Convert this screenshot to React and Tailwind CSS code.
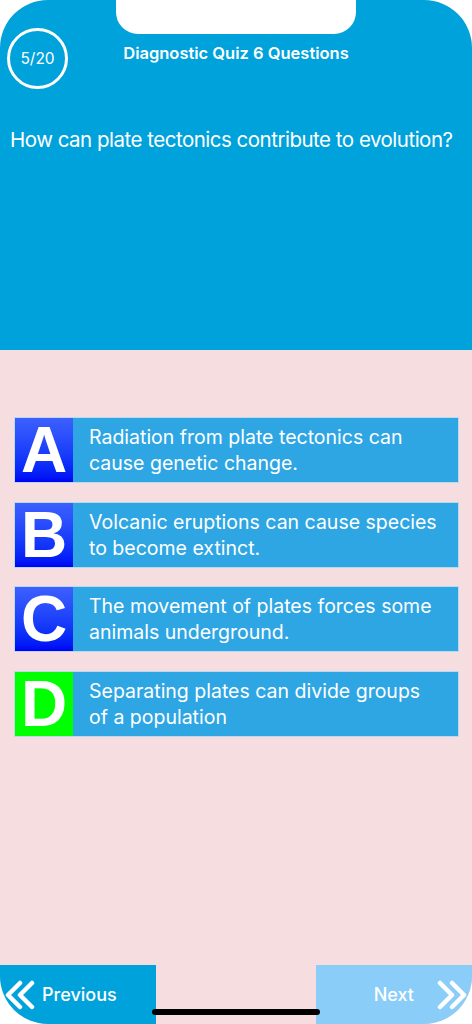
const options = [
  { letter: 'A', text: 'Radiation from plate tectonics can cause genetic change.', box: 'bg-gradient-to-b from-[#3d5fff] to-[#0000f5]' },
  { letter: 'B', text: 'Volcanic eruptions can cause species to become extinct.', box: 'bg-gradient-to-b from-[#3d5fff] to-[#0000f5]' },
  { letter: 'C', text: 'The movement of plates forces some animals underground.', box: 'bg-gradient-to-b from-[#3d5fff] to-[#0000f5]' },
  { letter: 'D', text: 'Separating plates can divide groups of a population', box: 'bg-[#00ff00]' },
];

function DoubleChevron({ dir = 'left' }) {
  const d = dir === 'left'
    ? 'M16 3 L4 15 L16 27 M28 3 L16 15 L28 27'
    : 'M4 3 L16 15 L4 27 M16 3 L28 15 L16 27';
  return (
    <svg width="32" height="30" viewBox="0 0 32 30" fill="none">
      <path d={d} stroke="white" strokeWidth="4.5" strokeLinecap="round" strokeLinejoin="round" />
    </svg>
  );
}

export default function App() {
  return (
    <div className="w-[472px] h-[1024px] bg-white" style={{ fontFamily: 'Inter, "Liberation Sans", sans-serif' }}>
      <div className="relative w-full h-full rounded-[48px] overflow-hidden flex flex-col bg-[#f6dde0]">
        {/* notch */}
        <div className="absolute left-[116px] top-0 w-[240px] h-[34px] bg-white rounded-b-[22px]" />

        {/* Header */}
        <div className="h-[350px] bg-[#00a2dc] text-white shrink-0">
          <div className="relative h-[94px]">
            <div className="absolute left-[7px] top-[28px] w-[61px] h-[61px] rounded-full border-[3px] border-white flex items-center justify-center text-[15.5px]">
              5/20
            </div>
            <div className="pt-[41px] text-center text-[16.5px] font-semibold">Diagnostic Quiz 6 Questions</div>
          </div>
          <p className="px-[10px] pt-[33px] text-[20.5px] leading-[26px] whitespace-nowrap tracking-[-0.5px]">How can plate tectonics contribute to evolution?</p>
        </div>

        {/* Options */}
        <div className="flex-1 flex flex-col gap-[18.5px] px-[14px] pt-[67px]">
          {options.map((o) => (
            <div key={o.letter} className="flex h-[66px] w-[445px] border border-[#b9d9ee] bg-[#2ea6e4]">
              <div className={`w-[58px] shrink-0 flex items-center justify-center text-white font-bold text-[64px] leading-none ${o.box}`} style={{ fontFamily: '"Liberation Sans", Arial, sans-serif' }}>
                {o.letter}
              </div>
              <div className="flex items-center pl-[16px] pr-[20px] text-white text-[19.5px] leading-[26px]">
                {o.text}
              </div>
            </div>
          ))}
        </div>

        {/* Bottom bar */}
        <div className="h-[59px] flex justify-between shrink-0">
          <div className="w-[156px] bg-[#00a2dc] flex items-center gap-[6px] pl-[4px] text-white text-[18px] font-medium">
            <DoubleChevron dir="left" />
            <span>Previous</span>
          </div>
          <div className="w-[156px] bg-[#89cdf8] flex items-center justify-end gap-[22px] pr-[4px] text-white text-[18px] font-medium">
            <span>Next</span>
            <DoubleChevron dir="right" />
          </div>
        </div>

        {/* home indicator */}
        <div className="absolute left-[152px] bottom-[9px] w-[168px] h-[6px] rounded-full bg-black" />
      </div>
    </div>
  );
}
